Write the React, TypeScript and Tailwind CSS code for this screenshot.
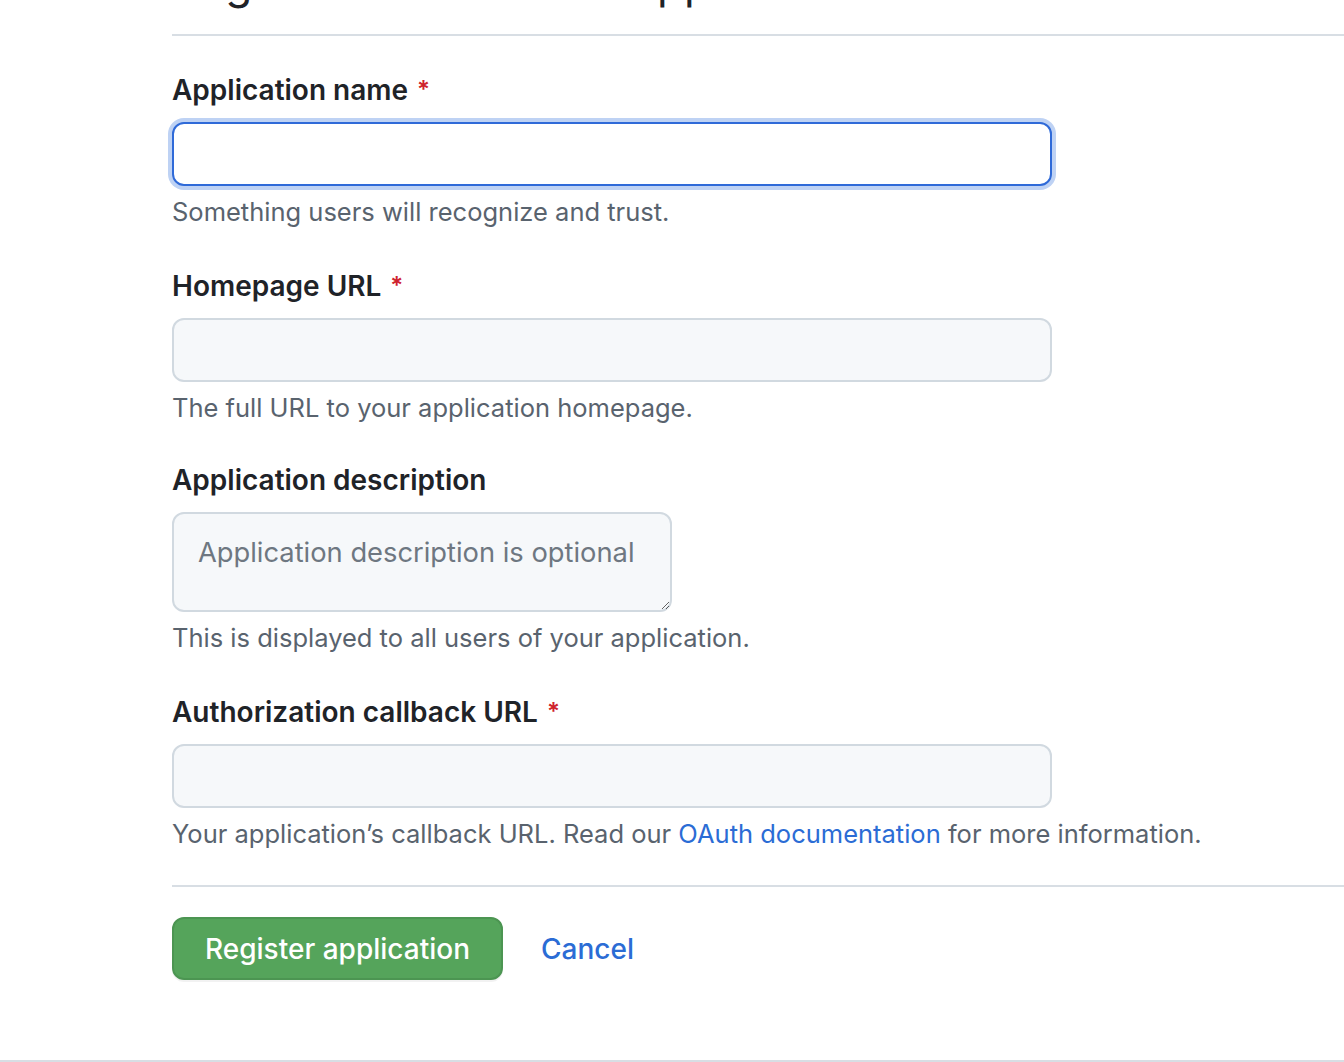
import { ReactNode } from 'react'

const font = { fontFamily: 'Inter, "Noto Sans", "Liberation Sans", sans-serif' }

function Label({ children, required }: { children: ReactNode; required?: boolean }) {
  return (
    <label className="flex items-center text-[28px] leading-[42px] font-semibold text-[#1f2328] mb-[11px]">
      {children}
      {required && <span className="ml-[9px] text-[#cf222e] text-[24px]">*</span>}
    </label>
  )
}

function Help({ children }: { children: ReactNode }) {
  return <p className="mt-2 text-[25.5px] leading-[36px] text-[#59636e]">{children}</p>
}

export default function App() {
  return (
    <div style={font} className="min-h-[1062px] bg-white overflow-hidden flex flex-col">
      <div className="pl-[172px]">
        {/* Subhead */}
        <div className="-mt-[48px] pb-[20px] border-b-2 border-[#d8dee4]">
          <h1 className="text-[44px] leading-[62px] font-normal text-[#1f2328]">
            Register a new OAuth application
          </h1>
        </div>

        <form className="pt-[33px]">
          <div>
            <Label required>Application name</Label>
            <input
              type="text"
              className="block w-[880px] h-[64px] rounded-[12px] border-2 border-[#2f6ad8] bg-white ring-4 ring-[#bed2f4] outline-none px-4 text-[28px]"
            />
            <Help>Something users will recognize and trust.</Help>
          </div>

          <div className="mt-[35px]">
            <Label required>Homepage URL</Label>
            <input
              type="text"
              className="block w-[880px] h-[64px] rounded-[12px] border-2 border-[#d1d9e0] bg-[#f6f8fa] outline-none px-4 text-[28px]"
            />
            <Help>The full URL to your application homepage.</Help>
          </div>

          <div className="mt-[33px]">
            <Label>Application description</Label>
            <textarea
              placeholder="Application description is optional"
              className="block w-[500px] h-[100px] rounded-[12px] border-2 border-[#d1d9e0] bg-[#f6f8fa] outline-none px-[24px] py-[19px] text-[27.3px] leading-[40px] text-[#1f2328] placeholder:text-[#6e7781]"
            />
            <Help>This is displayed to all users of your application.</Help>
          </div>

          <div className="mt-[35px]">
            <Label required>Authorization callback URL</Label>
            <input
              type="text"
              className="block w-[880px] h-[64px] rounded-[12px] border-2 border-[#d1d9e0] bg-[#f6f8fa] outline-none px-4 text-[28px]"
            />
            <Help>
              Your application’s callback URL. Read our{' '}
              <a href="#" className="text-[#2b6cd5]">
                OAuth documentation
              </a>{' '}
              for more information.
            </Help>
          </div>

          <div className="mt-[33px] border-t-2 border-[#d8dee4] pt-[30px] flex items-center gap-[38px]">
            <button
              type="button"
              className="h-[63px] px-[31px] rounded-[12px] bg-[#55a45b] border-2 border-[#4c9552] text-white text-[28px] font-medium shadow-[0_2px_0_rgba(31,35,40,0.06)]"
            >
              Register application
            </button>
            <a href="#" className="text-[28px] font-medium text-[#2b6cd5]">
              Cancel
            </a>
          </div>
        </form>
      </div>
      <div className="mt-auto border-t-2 border-[#d8dee4]" />
    </div>
  )
}
